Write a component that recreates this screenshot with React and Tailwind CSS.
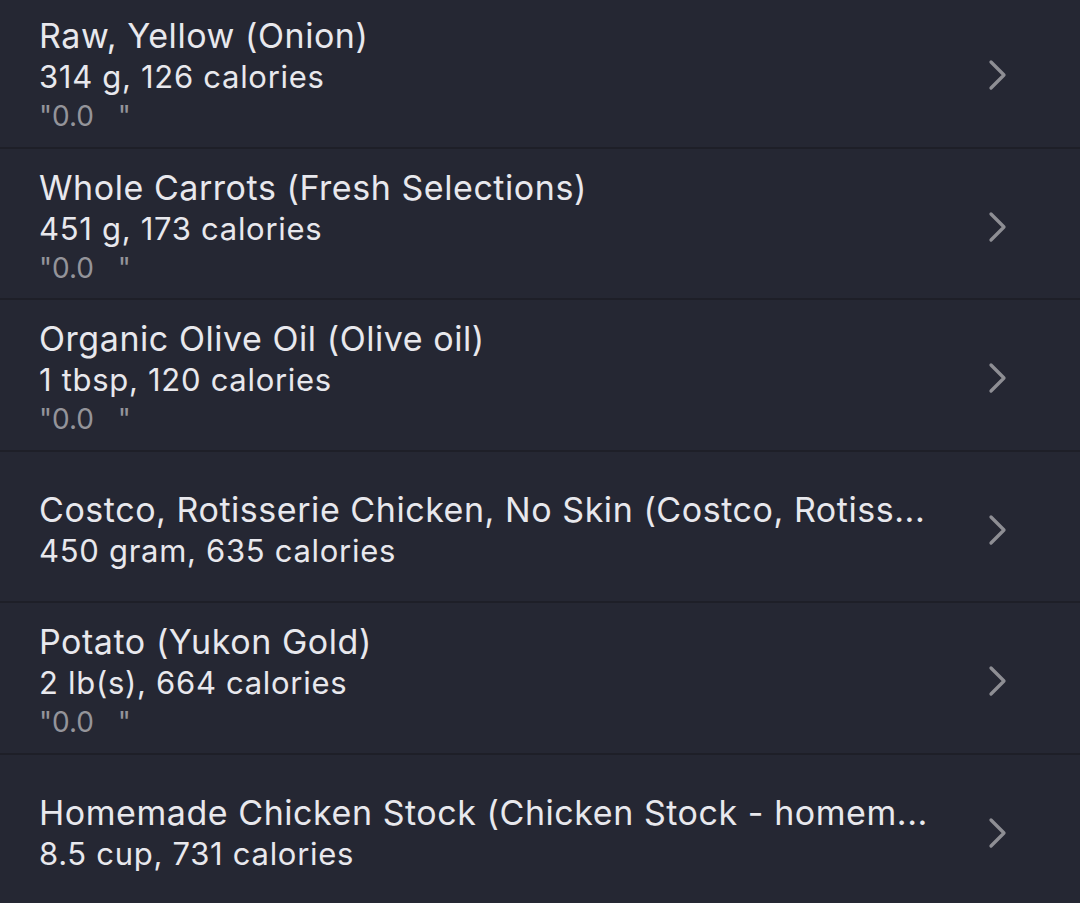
import { useState } from 'react'

const items = [
  { name: 'Raw, Yellow (Onion)', detail: '314 g, 126 calories', note: true },
  { name: 'Whole Carrots (Fresh Selections)', detail: '451 g, 173 calories', note: true },
  { name: 'Organic Olive Oil (Olive oil)', detail: '1 tbsp, 120 calories', note: true },
  { name: 'Costco, Rotisserie Chicken, No Skin (Costco, Rotiss...', detail: '450 gram, 635 calories', note: false },
  { name: 'Potato (Yukon Gold)', detail: '2 lb(s), 664 calories', note: true },
  { name: 'Homemade Chicken Stock (Chicken Stock - homem...', detail: '8.5 cup, 731 calories', note: false },
]

const Chevron = () => (
  <svg width="24" height="32" viewBox="0 0 24 32" fill="none" className="shrink-0">
    <path d="M5 3 L18 16 L5 29" stroke="#8e8e94" strokeWidth="3.3" strokeLinecap="round" strokeLinejoin="round" />
  </svg>
)

const Row = ({ item }) => (
  <button className="w-full h-[151.5px] flex items-center justify-between pt-[7px] pl-[39px] pr-[70px] border-b-[2px] border-[#1e1f28] text-left">
    <div className="flex flex-col min-w-0">
      <span className="text-[34px] leading-[41px] tracking-[0.55px] text-[#e8e8ed] whitespace-nowrap">{item.name}</span>
      <span className="text-[31px] leading-[41px] tracking-[0.7px] text-[#e8e8ed] whitespace-nowrap">{item.detail}</span>
      {item.note && (
        <span className="text-[28px] leading-[38px] text-[#94949a] whitespace-pre">{'"0.0   "'}</span>
      )}
    </div>
    <Chevron />
  </button>
)

export default function App() {
  const [list] = useState(items)
  return (
    <div className="w-[1080px] h-[903px] overflow-hidden bg-[#252733]" style={{ fontFamily: 'Inter, "Noto Sans", sans-serif' }}>
      <div className="-mt-[3px]">
        {list.map((item, i) => (
          <Row key={i} item={item} />
        ))}
      </div>
    </div>
  )
}
